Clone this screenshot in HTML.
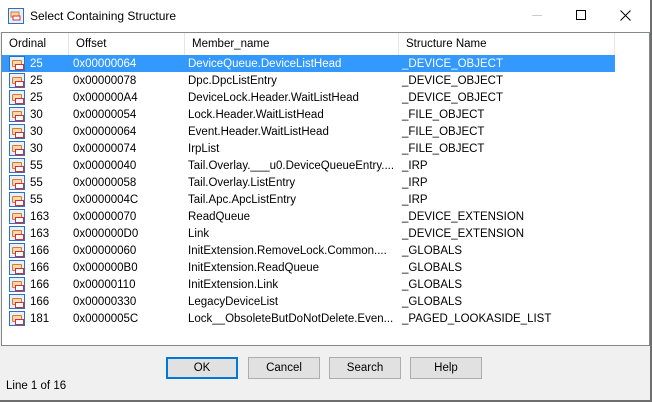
<!DOCTYPE html>
<html><head><style>
*{margin:0;padding:0;box-sizing:border-box}
body{width:652px;height:402px;background:#f0f0f0;font-family:"Liberation Sans",sans-serif;font-size:11.5px;color:#000;position:relative;overflow:hidden}
.title{position:absolute;left:0;top:0;width:652px;height:32px;background:#fff}
.title .t{position:absolute;left:30px;top:9px;font-size:12px}
.list{position:absolute;left:1px;top:32px;width:649px;height:314px;background:#fff;border:1px solid #828790}
.hdr{position:absolute;top:0;height:22px;left:0;width:647px}
.hdr div{position:absolute;top:0;height:22px;line-height:22px;padding-left:7px;border-right:1px solid #e5e5e5}
.row{position:absolute;left:0;height:17px;width:613px;line-height:18px;white-space:nowrap}
.row.sel{background:#3399ff;color:#fff}
.row span{position:absolute;top:0}
.ic{position:absolute;left:7px;top:1px;width:16px;height:15px;border:1px solid #2f6fc4;background:#e8f0fb}
.ic:before{content:"";position:absolute;left:2px;top:3px;width:8px;height:5px;border:1.5px solid #e0782a;border-radius:1px;background:#fbd9b0}
.ic:after{content:"";position:absolute;left:5px;top:7px;width:7px;height:4px;border:1.5px solid #d0303a;background:#fff}
.btn{position:absolute;top:357px;width:72px;height:22px;background:#e1e1e1;border:1px solid #adadad;text-align:center;line-height:20px}
.btn.def{border:2px solid #0078d7;line-height:18px}
.win{position:absolute;right:0;top:0;width:2px;height:402px;background:#6e6e6e}
</style></head><body>
<div class="title">
<svg style="position:absolute;left:8px;top:8px" width="16" height="16"><rect x="0.5" y="0.5" width="15" height="15" fill="#e8f0fb" stroke="#2f6fc4"/><rect x="3" y="4" width="8" height="5" fill="#fbd9b0" stroke="#e0782a"/><rect x="5" y="8" width="7" height="4" fill="#fff" stroke="#d0303a"/></svg>
<div class="t">Select Containing Structure</div>
<div style="position:absolute;left:532px;top:15px;width:10px;height:1px;background:#ccc"></div>
<div style="position:absolute;left:576px;top:10px;width:10px;height:10px;border:1px solid #000"></div>
<svg style="position:absolute;left:620px;top:10px" width="11" height="11"><path d="M0.5 0.5L10.5 10.5M10.5 0.5L0.5 10.5" stroke="#000" stroke-width="1"/></svg>
</div>
<div class="list">
<div class="hdr">
<div style="left:0;width:67px">Ordinal</div>
<div style="left:67px;width:116px">Offset</div>
<div style="left:183px;width:214px">Member_name</div>
<div style="left:397px;width:216px">Structure Name</div>
</div>
<div id="rows"></div>
</div>
<div class="win"></div>
<div style="position:absolute;left:0;bottom:0;width:652px;height:2px;background:#6e6e6e"></div>
<div class="btn def" style="left:166px">OK</div>
<div class="btn" style="left:248px">Cancel</div>
<div class="btn" style="left:329px">Search</div>
<div class="btn" style="left:410px">Help</div>
<div style="position:absolute;left:6px;top:380px">Line 1 of 16</div>
<script>
var d=[["25","0x00000064","DeviceQueue.DeviceListHead","_DEVICE_OBJECT"],["25","0x00000078","Dpc.DpcListEntry","_DEVICE_OBJECT"],["25","0x000000A4","DeviceLock.Header.WaitListHead","_DEVICE_OBJECT"],["30","0x00000054","Lock.Header.WaitListHead","_FILE_OBJECT"],["30","0x00000064","Event.Header.WaitListHead","_FILE_OBJECT"],["30","0x00000074","IrpList","_FILE_OBJECT"],["55","0x00000040","Tail.Overlay.___u0.DeviceQueueEntry....","_IRP"],["55","0x00000058","Tail.Overlay.ListEntry","_IRP"],["55","0x0000004C","Tail.Apc.ApcListEntry","_IRP"],["163","0x00000070","ReadQueue","_DEVICE_EXTENSION"],["163","0x000000D0","Link","_DEVICE_EXTENSION"],["166","0x00000060","InitExtension.RemoveLock.Common....","_GLOBALS"],["166","0x000000B0","InitExtension.ReadQueue","_GLOBALS"],["166","0x00000110","InitExtension.Link","_GLOBALS"],["166","0x00000330","LegacyDeviceList","_GLOBALS"],["181","0x0000005C","Lock__ObsoleteButDoNotDelete.Even...","_PAGED_LOOKASIDE_LIST"]];
var h="";d.forEach(function(r,i){h+='<div class="row'+(i==0?' sel':'')+'" style="top:'+(22+i*17)+'px"><i class="ic"></i><span style="left:28px">'+r[0]+'</span><span style="left:71px">'+r[1]+'</span><span style="left:186px">'+r[2]+'</span><span style="left:400px">'+r[3]+'</span></div>'});
document.getElementById("rows").innerHTML=h;
</script>
</body></html>
